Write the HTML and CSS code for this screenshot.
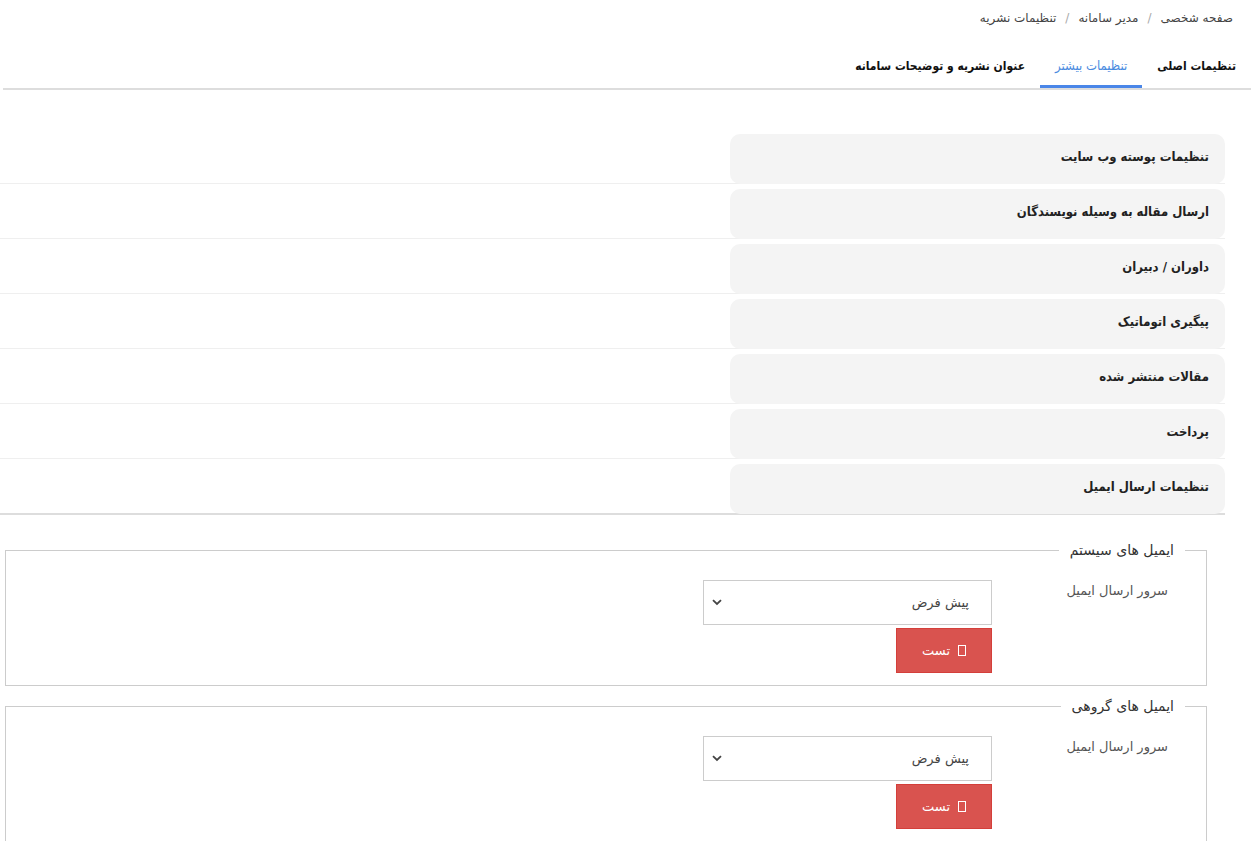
FILE: index.html
```html
<!DOCTYPE html>
<html lang="fa" dir="rtl">
<head>
<meta charset="utf-8">
<title>تنظیمات نشریه</title>
<link rel="stylesheet" href="styles.css">
</head>
<body>
<div class="page">
  <nav class="breadcrumb">
    <span>صفحه شخصی</span><span class="sep">/</span><span>مدیر سامانه</span><span class="sep">/</span><span>تنظیمات نشریه</span>
  </nav>
  <ul class="tabs">
    <li class="tab">تنظیمات اصلی</li>
    <li class="tab active">تنظیمات بیشتر</li>
    <li class="tab">عنوان نشریه و توضیحات سامانه</li>
  </ul>
  <div class="accordion">
    <div class="acc-item"><div class="acc-head">تنظیمات پوسته وب سایت</div></div>
    <div class="acc-item"><div class="acc-head">ارسال مقاله به وسیله نویسندگان</div></div>
    <div class="acc-item"><div class="acc-head">داوران / دبیران</div></div>
    <div class="acc-item"><div class="acc-head">پیگیری اتوماتیک</div></div>
    <div class="acc-item"><div class="acc-head">مقالات منتشر شده</div></div>
    <div class="acc-item"><div class="acc-head">پرداخت</div></div>
    <div class="acc-item last"><div class="acc-head">تنظیمات ارسال ایمیل</div></div>
  </div>
  <div class="email-body">
    <fieldset class="box">
      <legend>ایمیل های سیستم</legend>
      <div class="form-row">
        <label class="lbl">سرور ارسال ایمیل</label>
        <div class="ctrl">
          <div class="select"><span>پیش فرض</span><svg class="chev" width="10" height="7" viewBox="0 0 10 7"><path d="M1 1.2 L5 5 L9 1.2" fill="none" stroke="#444" stroke-width="1.8"/></svg></div>
          <button class="btn-test"><span class="ico"></span><span>تست</span></button>
        </div>
      </div>
    </fieldset>
    <fieldset class="box">
      <legend>ایمیل های گروهی</legend>
      <div class="form-row">
        <label class="lbl">سرور ارسال ایمیل</label>
        <div class="ctrl">
          <div class="select"><span>پیش فرض</span><svg class="chev" width="10" height="7" viewBox="0 0 10 7"><path d="M1 1.2 L5 5 L9 1.2" fill="none" stroke="#444" stroke-width="1.8"/></svg></div>
          <button class="btn-test"><span class="ico"></span><span>تست</span></button>
        </div>
      </div>
    </fieldset>
  </div>
</div>
</body>
</html>
```
FILE: styles.css
```css
* { box-sizing: border-box; }
html, body { margin: 0; padding: 0; background: #fff; }
body {
  font-family: "DejaVu Sans", sans-serif;
  font-size: 13px;
  color: #333;
  direction: rtl;
  overflow: hidden;
}
.page { width: 1251px; }
.breadcrumb {
  height: 38px;
  padding: 11px 18px 0 0;
  font-size: 12px;
  color: #444;
  display: flex;
}
.breadcrumb .sep { color: #aaa; margin: 0 9px; }
.tabs {
  list-style: none;
  margin: 0 0 0 3px;
  padding: 0;
  height: 52px;
  display: flex;
  border-bottom: 2px solid #ddd;
}
.tab {
  padding: 0 15px;
  height: 50px;
  line-height: 56px;
  font-family: "DejaVu Sans Condensed", "DejaVu Sans", sans-serif;
  font-weight: bold;
  color: #111;
  font-size: 12px;
  border-bottom: 3px solid transparent;
  margin-bottom: -2px;
}
.tab.active { color: #4a8be0; border-bottom-color: #4a86e8; font-weight: normal; font-size: 13px; }
.accordion {
  margin: 44px 26px 0 0;
}
.acc-item {
  display: flex;
  height: 55px;
  position: relative;
}
.acc-item::after {
  content: "";
  position: absolute;
  left: 0; right: 0; top: 49px;
  border-top: 1px solid #efefef;
}
.acc-item.last { height: 50px; }
.acc-item.last::after { top: 49px; border-top: 2px solid #ddd; }
.acc-head {
  position: relative;
  z-index: 1;
  width: 495px;
  height: 50px;
  background: #f4f4f4;
  border-radius: 10px;
  padding: 0 16px;
  line-height: 46px;
  font-family: "DejaVu Sans Condensed", "DejaVu Sans", sans-serif;
  font-weight: bold;
  font-size: 13px;
  color: #222;
}
.email-body { padding: 28px 44px 0 5px; }
.box {
  margin: 0 0 12px 0;
  border: 1px solid #ccc;
  padding: 0;
  min-width: 0;
}
.box legend {
  margin-right: 21px;
  padding: 0 11px;
  font-size: 14px;
  color: #333;
}
.form-row { display: flex; padding: 22px 38px 12px 0; }
.lbl {
  width: 176px;
  padding-top: 3px;
  color: #555;
  font-size: 13px;
}
.ctrl { display: flex; flex-direction: column; align-items: flex-start; }
.select {
  width: 289px;
  height: 45px;
  border: 1px solid #ccc;
  display: flex;
  align-items: center;
  justify-content: space-between;
  padding: 0 22px 0 8px;
  font-size: 13px;
  color: #444;
}
.chev { display: block; }
.btn-test {
  margin-top: 3px;
  width: 96px;
  height: 45px;
  background: #d9534f;
  border: 1px solid #d43f3a;
  color: #fff;
  font-family: inherit;
  font-size: 13px;
  display: flex;
  align-items: center;
  justify-content: center;
  gap: 8px;
  padding: 0;
  direction: rtl;
}
.btn-test .ico {
  width: 8px;
  height: 11px;
  border: 1px solid #fff;
  display: inline-block;
}
```
